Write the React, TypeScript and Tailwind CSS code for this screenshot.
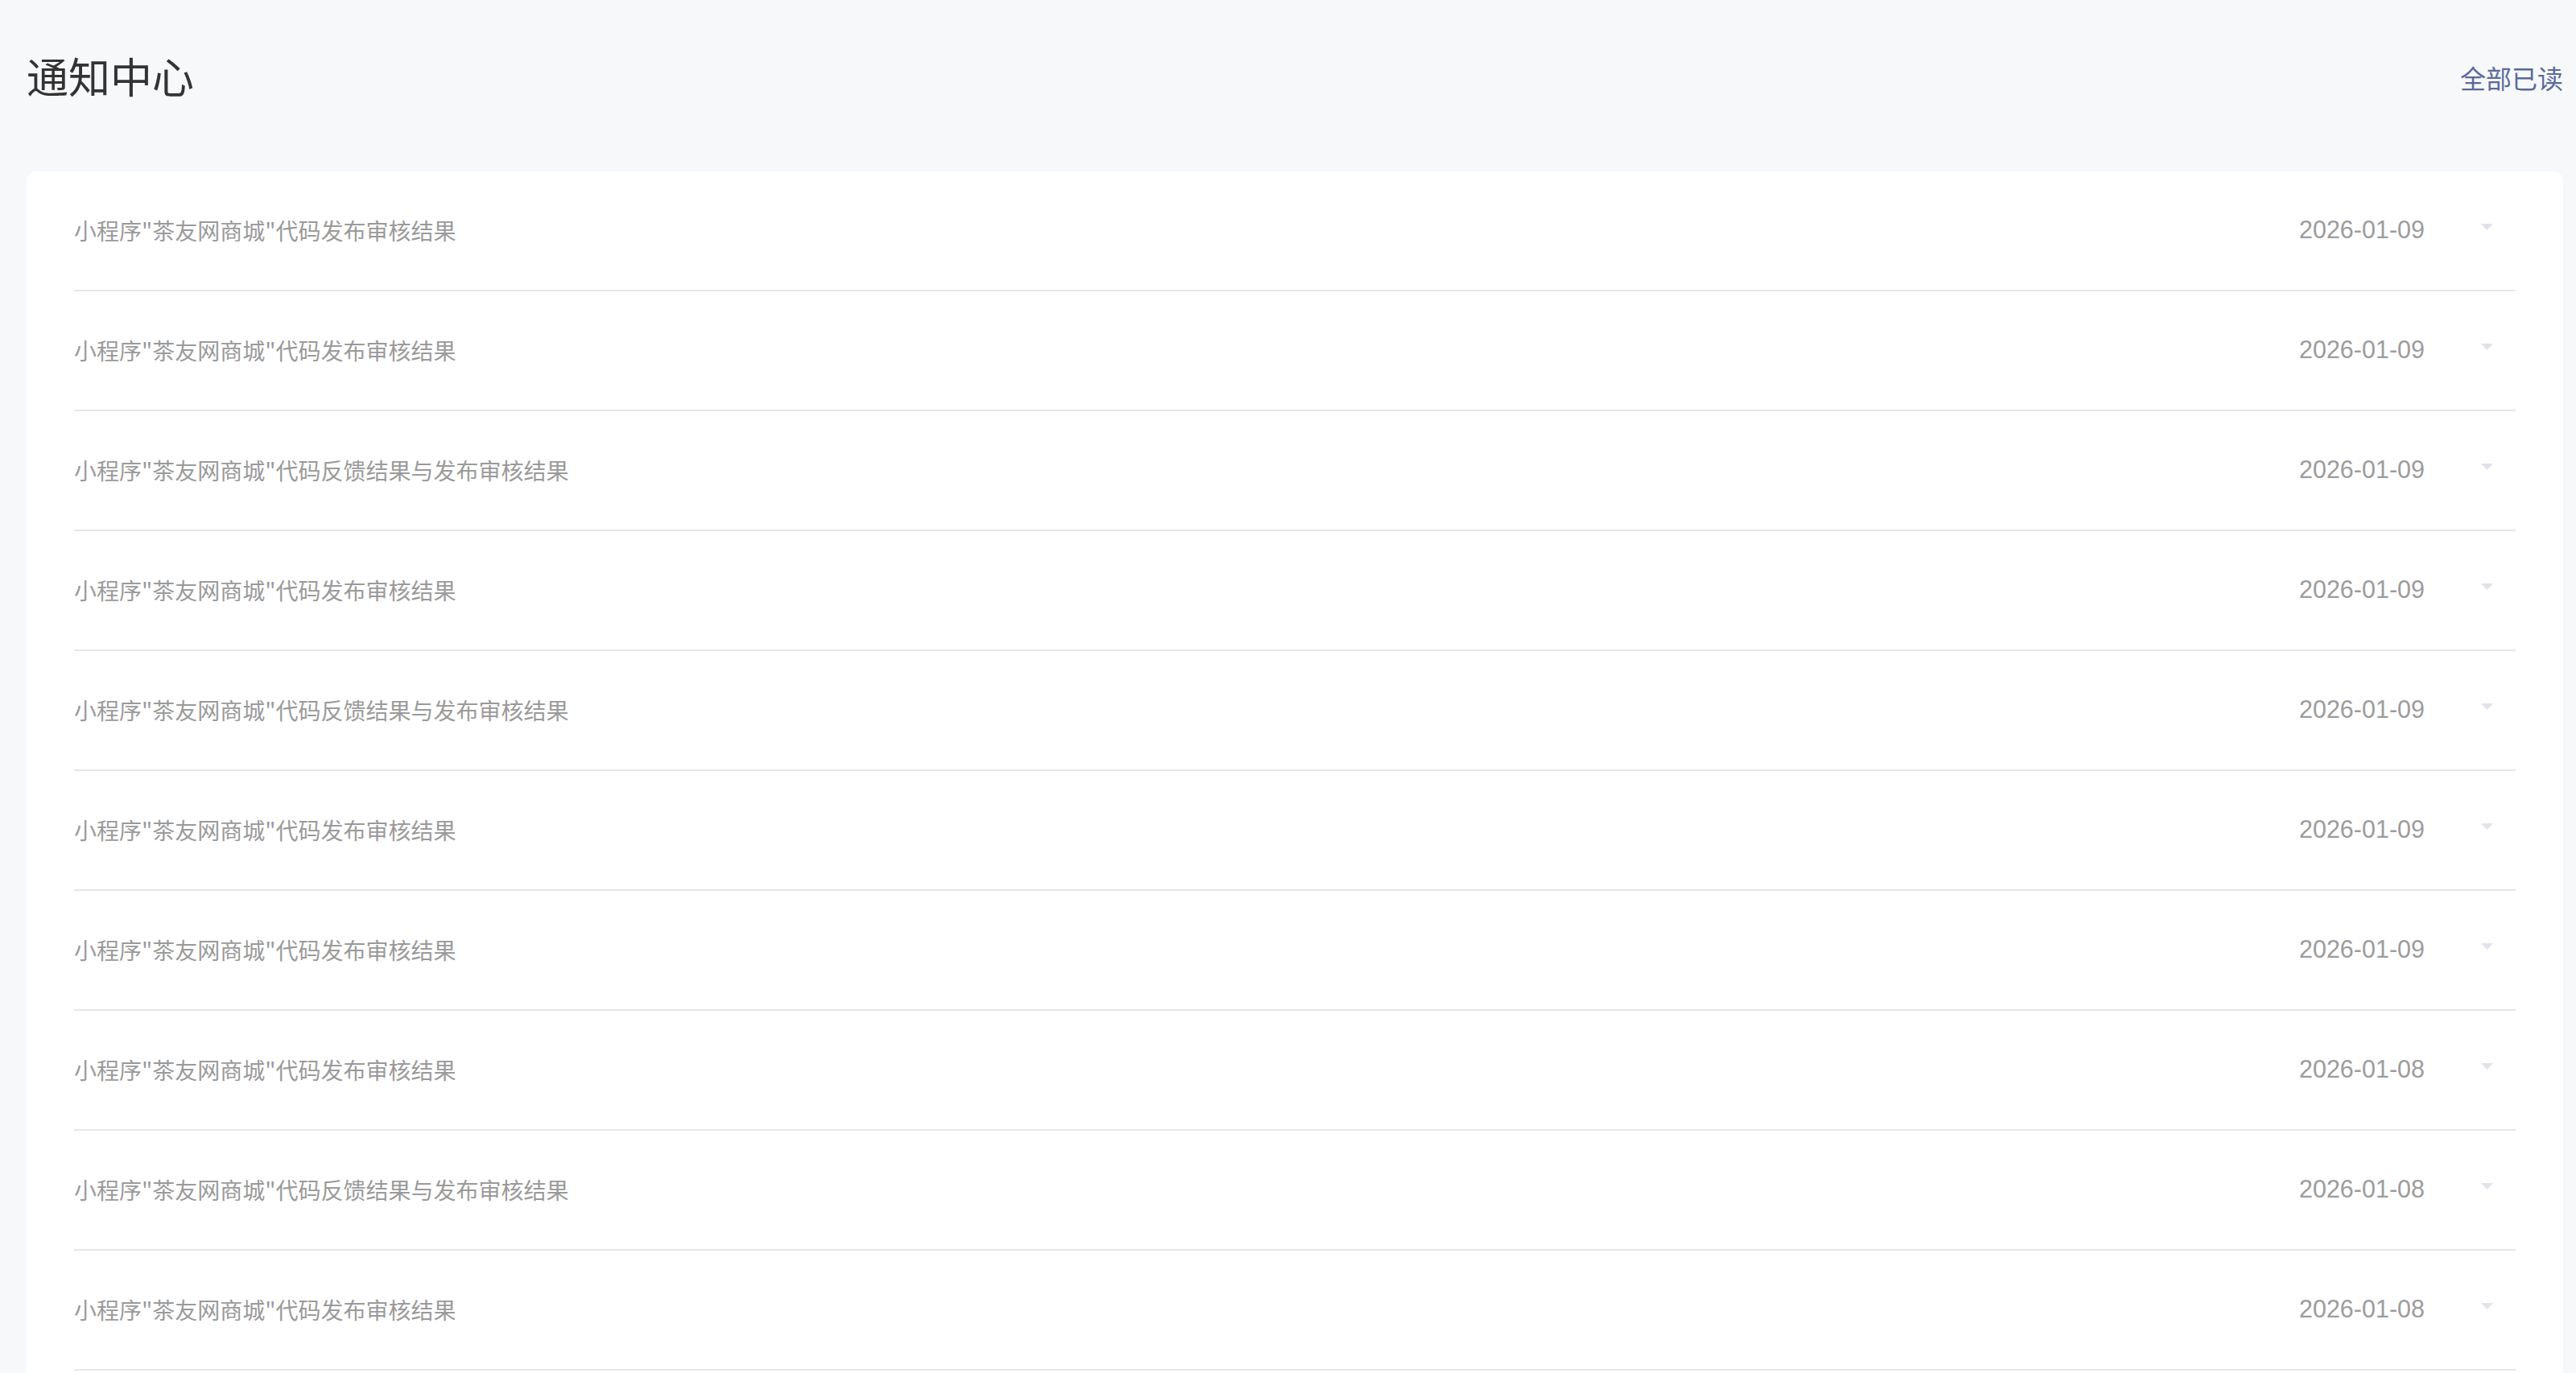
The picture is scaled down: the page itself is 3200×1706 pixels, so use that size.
import React from "react"

type Notice = {
  title: string
  date: string
}

const PUBLISH = '小程序"茶友网商城"代码发布审核结果'
const FEEDBACK = '小程序"茶友网商城"代码反馈结果与发布审核结果'

const notices: Notice[] = [
  { title: PUBLISH, date: "2026-01-09" },
  { title: PUBLISH, date: "2026-01-09" },
  { title: FEEDBACK, date: "2026-01-09" },
  { title: PUBLISH, date: "2026-01-09" },
  { title: FEEDBACK, date: "2026-01-09" },
  { title: PUBLISH, date: "2026-01-09" },
  { title: PUBLISH, date: "2026-01-09" },
  { title: PUBLISH, date: "2026-01-08" },
  { title: FEEDBACK, date: "2026-01-08" },
  { title: PUBLISH, date: "2026-01-08" },
  { title: PUBLISH, date: "2026-01-08" },
]

const FONT = { fontFamily: '"Noto Sans CJK SC", "Noto Sans", sans-serif' }

function Watermark() {
  // faint repeated account id over the whole page
  const rows = Array.from({ length: 19 })
  const cols = Array.from({ length: 8 })
  return (
    <div className="pointer-events-none absolute inset-0 select-none overflow-hidden">
      <div className="flex flex-col gap-[56px] pt-[34px]">
        {rows.map((_, r) => (
          <div key={r} className="flex -ml-[70px] h-[36px]">
            {cols.map((_, c) => (
              <span
                key={c}
                className="w-[430px] shrink-0 text-[28px] leading-[36px] text-black/[0.02]"
                style={{ fontFamily: '"Liberation Sans", sans-serif' }}
              >
                Wq6qPh5gUXN
              </span>
            ))}
          </div>
        ))}
      </div>
    </div>
  )
}

function Caret() {
  return (
    <svg width="15" height="8" viewBox="0 0 15 8" className="mb-[10px]">
      <path d="M0 0 L15 0 L7.5 8 Z" fill="#e2e2ea" />
    </svg>
  )
}

function NoticeRow({ notice }: { notice: Notice }) {
  return (
    <div className="flex h-[149px] items-center border-b-2 border-[#e6e6ec] pr-[28px]">
      <span className="flex-1 pb-[2px] text-[28px] text-[#9a9a9a]">{notice.title}</span>
      <span
        className="pb-[2px] text-[30.5px] text-[#9c9c9c]"
        style={{ fontFamily: '"Liberation Sans", sans-serif' }}
      >
        {notice.date}
      </span>
      <div className="ml-[70px]">
        <Caret />
      </div>
    </div>
  )
}

export default function App() {
  return (
    <div className="relative h-[1706px] overflow-hidden bg-[#f7f8fa]" style={FONT}>
      <div className="pl-[33px] pr-[16px]">
        {/* Header */}
        <div className="flex h-[192px] items-center justify-between">
          <h1 className="pb-[4px] text-[52px] font-normal text-[#333333]">通知中心</h1>
          <button className="text-[32px] text-[#5a6a9c]">全部已读</button>
        </div>

        {/* List */}
        <div className="mt-[21px] rounded-[12px] bg-white px-[59px]">
          {notices.map((n, i) => (
            <NoticeRow key={i} notice={n} />
          ))}
        </div>
      </div>
      <Watermark />
    </div>
  )
}
